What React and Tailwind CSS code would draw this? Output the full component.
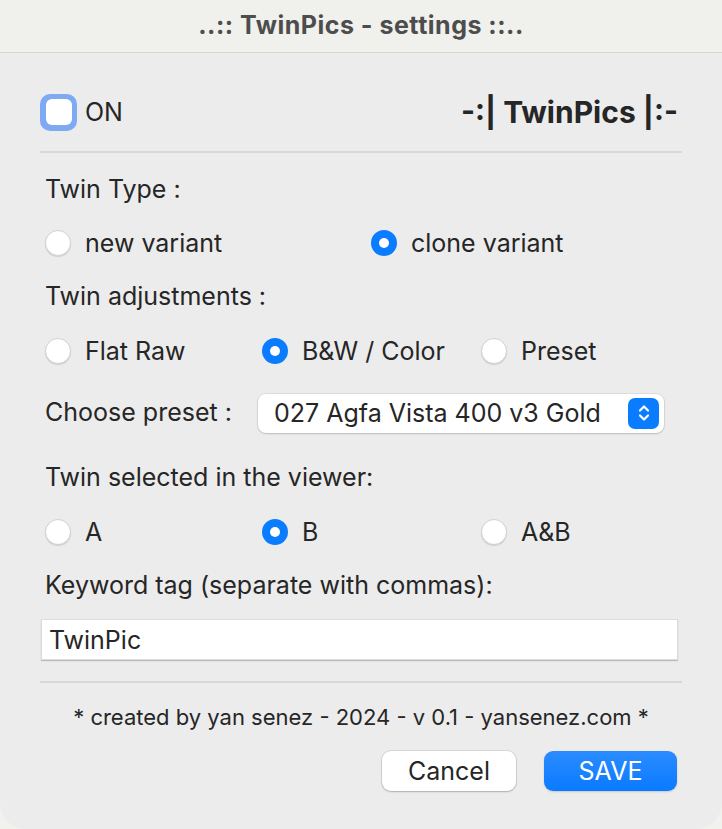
import React, { useState } from 'react';

const Radio = ({ checked, label, onClick, className = '' }) => (
  <button type="button" onClick={onClick} className={`flex items-center gap-[14px] ${className}`}>
    {checked ? (
      <span className="flex h-[26px] w-[26px] items-center justify-center rounded-full bg-[#0a7cff]">
        <span className="h-[10px] w-[10px] rounded-full bg-white" />
      </span>
    ) : (
      <span className="h-[26px] w-[26px] rounded-full border border-[#d2d2d2] bg-white shadow-[0_1px_1px_rgba(0,0,0,0.12)]" />
    )}
    <span className="text-[25px] leading-none text-[#262626]">{label}</span>
  </button>
);

const App = () => {
  const [on, setOn] = useState(false);
  const [twinType, setTwinType] = useState('clone');
  const [adjust, setAdjust] = useState('bw');
  const [viewer, setViewer] = useState('B');
  const [keyword, setKeyword] = useState('TwinPic');

  return (
    <div className="h-[829px] w-[722px] bg-[#f1f1ed] font-['Inter',sans-serif] text-[#262626]">
      {/* Title bar */}
      <div className="flex h-[53px] items-center justify-center border-b border-[#d6d6d4] bg-[#f0f0ec]">
        <span className="text-[25px] font-bold tracking-[0.5px] text-[#4d4d4d]">..:: TwinPics - settings ::..</span>
      </div>

      {/* Body */}
      <div className="h-[776px] rounded-b-[26px] bg-[#ececec] px-[40px] pt-[39px]">
        <div className="flex h-[40px] items-center justify-between pr-[4px]">
          <button type="button" onClick={() => setOn(!on)} className="flex items-center gap-[8px]">
            <span className="flex h-[37px] w-[37px] items-center justify-center rounded-[10px] bg-[#7eaaf4]">
              <span className="h-[26px] w-[26px] rounded-[6px] bg-white" />
            </span>
            <span className="text-[25px] leading-none">ON</span>
          </button>
          <span className="text-[30px] font-bold leading-none text-[#262626]">-:| TwinPics |:-</span>
        </div>

        <div className="mt-[19px] h-[2px] bg-[#d8d8d8]" />

        <div className="pl-[5px]">
          <div className="mt-[22px] flex h-[30px] items-center text-[25px]">Twin Type :</div>
          <div className="mt-[23px] flex h-[30px] items-center">
            <Radio className="w-[326px]" label="new variant" checked={twinType === 'new'} onClick={() => setTwinType('new')} />
            <Radio label="clone variant" checked={twinType === 'clone'} onClick={() => setTwinType('clone')} />
          </div>

          <div className="mt-[24px] flex h-[30px] items-center text-[25px]">Twin adjustments :</div>
          <div className="mt-[24px] flex h-[30px] items-center">
            <Radio className="w-[217px]" label="Flat Raw" checked={adjust === 'flat'} onClick={() => setAdjust('flat')} />
            <Radio className="w-[219px]" label="B&W / Color" checked={adjust === 'bw'} onClick={() => setAdjust('bw')} />
            <Radio label="Preset" checked={adjust === 'preset'} onClick={() => setAdjust('preset')} />
          </div>

          <div className="mt-[27px] flex h-[40px] items-center">
            <span className="w-[213px] text-[25px]">Choose preset :</span>
            <div className="flex h-[39px] w-[406px] items-center justify-between rounded-[8px] bg-white pl-[16px] pr-[5px] shadow-[0_0_0_1px_rgba(0,0,0,0.06),0_1px_2px_rgba(0,0,0,0.15)]">
              <span className="text-[25px] leading-none">027 Agfa Vista 400 v3 Gold</span>
              <span className="flex h-[31px] w-[31px] items-center justify-center rounded-[7px] bg-[#0a7cff]">
                <svg width="14" height="20" viewBox="0 0 14 20" fill="none" stroke="white" strokeWidth="2.2" strokeLinecap="round" strokeLinejoin="round">
                  <path d="M3 7.5L7 3.5L11 7.5" />
                  <path d="M3 12.5L7 16.5L11 12.5" />
                </svg>
              </span>
            </div>
          </div>

          <div className="mt-[30px] flex h-[30px] items-center text-[25px]">Twin selected in the viewer:</div>
          <div className="mt-[24px] flex h-[30px] items-center">
            <Radio className="w-[217px]" label="A" checked={viewer === 'A'} onClick={() => setViewer('A')} />
            <Radio className="w-[219px]" label="B" checked={viewer === 'B'} onClick={() => setViewer('B')} />
            <Radio label="A&B" checked={viewer === 'AB'} onClick={() => setViewer('AB')} />
          </div>

          <div className="mt-[24px] flex h-[30px] items-center text-[25px]">Keyword tag (separate with commas):</div>
        </div>

        <input
          type="text"
          value={keyword}
          onChange={(e) => setKeyword(e.target.value)}
          className="mt-[18px] ml-[1px] block h-[41px] w-[637px] border border-[#dcdcdc] bg-white px-[7px] text-[25px] text-[#262626] shadow-[0_1px_1px_rgba(0,0,0,0.2)] outline-none"
        />

        <div className="mt-[21px] h-[2px] bg-[#d8d8d8]" />

        <div className="mt-[19px] flex h-[30px] items-center justify-center text-[22px]">* created by yan senez - 2024 - v 0.1 - yansenez.com *</div>

        <div className="mt-[19px] flex justify-end gap-[28px] pr-[5px]">
          <button type="button" className="h-[40px] w-[134px] rounded-[9px] bg-white text-[25px] leading-none text-[#262626] shadow-[0_0_0_1px_rgba(0,0,0,0.08),0_1px_2px_rgba(0,0,0,0.2)]">
            Cancel
          </button>
          <button type="button" className="h-[40px] w-[133px] rounded-[9px] bg-[linear-gradient(#2b8cff,#0a7aff)] text-[25px] leading-none text-white shadow-[0_1px_2px_rgba(0,0,0,0.15)]">
            SAVE
          </button>
        </div>
      </div>
    </div>
  );
};

export default App;
